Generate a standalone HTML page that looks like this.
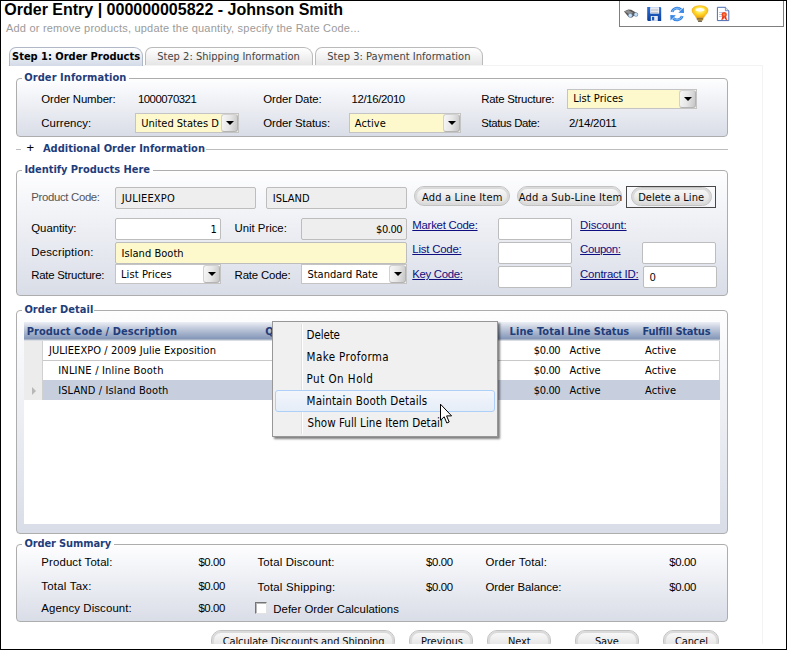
<!DOCTYPE html>
<html>
<head>
<meta charset="utf-8">
<title>Order Entry</title>
<style>
html,body{margin:0;padding:0;}
body{width:787px;height:650px;overflow:hidden;position:relative;background:#fff;font-family:"Liberation Sans",sans-serif;font-size:11px;color:#000;}
div,span,a,i{position:absolute;white-space:nowrap;box-sizing:border-box;}
#frame{left:0;top:0;width:787px;height:650px;border:1px solid #000;z-index:100;}
#clip{left:0;top:0;width:787px;height:644px;overflow:hidden;}
#title{left:4.3px;top:1px;font:bold 16px/18px "Liberation Sans",sans-serif;color:#000;}
#sub{left:6px;top:21px;font:11px/14px "Liberation Sans",sans-serif;color:#9b9b9b;letter-spacing:0.205px;}
#tb{left:619px;top:-2px;width:165px;height:29px;border:1px solid #7f7f7f;background:#fff;}
#panel{left:8px;top:65px;width:755px;height:590px;border:1px solid #f3f3f3;border-left:none;background:#fff;}
.tab{top:47px;height:18px;border:1px solid #bababa;border-bottom:none;border-radius:7px 9px 0 0;background:linear-gradient(#ffffff,#e6e6e6);}
.tab.on{height:19px;background:linear-gradient(#ffffff 0%,#e9edf3 45%,#d3dbe8 100%);border-color:#b0b8c8;}
.fs{border:1px solid #adadad;border-radius:4px;background:linear-gradient(#fefeff,#d9dde7);}
.cut{background:#fff;height:3px;}
.inp{border:1px solid #bdbdbd;border-radius:2px;background:#fff;height:22px;}
.inp.g{background:#eeeeee;}
.inp.y{background:#fdf9cd;}
.dd{border:1px solid #c4c4c4;background:#fff;height:20px;}
.dd.y{background:#fdf9cd;}
.dd i{right:0;top:0;width:17px;height:18px;border:1px solid #d2d2d2;border-right-color:#b4b4b4;border-bottom-color:#b4b4b4;border-radius:3px;background:linear-gradient(100deg,#f7f7f7,#e6e6e6 50%,#c6c6c6);}
.dd i:after{content:"";position:absolute;left:3.5px;top:6px;border:4px solid transparent;border-top:4px solid #000;border-bottom:none;}
.btn{height:20px;border:1px solid #c2c2c2;border-radius:10px;background:linear-gradient(#fafafa,#ececec 50%,#dcdcdc);box-shadow:inset 0 0 0 2px #dadada;}
</style>
</head>
<body>
<div id="clip">
<div id="title">Order Entry | 000000005822 - Johnson Smith</div>
<div id="sub">Add or remove products, update the quantity, specify the Rate Code...</div>
<div id="tb"></div>
<svg id="icons" style="position:absolute;left:620px;top:0;" width="120" height="26" viewBox="620 0 120 26">
<defs>
<linearGradient id="gfl" x1="0" y1="0" x2="0" y2="1"><stop offset="0" stop-color="#2f6fd6"/><stop offset="1" stop-color="#0b3f9c"/></linearGradient>
<radialGradient id="gbu" cx="0.5" cy="0.38" r="0.62"><stop offset="0" stop-color="#fffbd0"/><stop offset="0.45" stop-color="#ffe23a"/><stop offset="1" stop-color="#f7a400"/></radialGradient>
</defs>
<g>
<path d="M624 11.4 L628.2 9.4 L631.2 9.8 L637.6 13.6 L637.4 16.2 L634 15.8 L632 17.6 L628.6 17 Z" fill="#555555"/>
<path d="M624.4 11.5 L628.4 9.9 L633.6 13 L629.2 14.2 Z" fill="#8e8e8e"/>
<circle cx="630.3" cy="15.4" r="2" fill="#c4e3ff" stroke="#74859a" stroke-width="0.6"/>
<circle cx="635.9" cy="14.5" r="1.9" fill="#c4e3ff" stroke="#74859a" stroke-width="0.6"/>
</g>
<g>
<path d="M647.2 7 H660.4 L661.2 7.8 V20.9 H648 L647.2 20.1 Z" fill="url(#gfl)"/>
<rect x="650.2" y="7.2" width="8.9" height="6.4" fill="#f4f6fa"/>
<rect x="651" y="8.8" width="7.3" height="0.8" fill="#b8bcc6"/>
<rect x="651" y="10.4" width="7.3" height="0.8" fill="#b8bcc6"/>
<rect x="651" y="12" width="7.3" height="0.8" fill="#b8bcc6"/>
<rect x="650.8" y="16" width="7" height="4.9" fill="#e6eaf2"/>
<rect x="652" y="16.8" width="2.2" height="3.5" fill="#1d55b8"/>
</g>
<g fill="none" stroke-linecap="butt">
<path d="M672 12 A5.3 5.3 0 0 1 681 9.8" stroke="#2f7fe2" stroke-width="2.8"/>
<path d="M682.2 16 A5.3 5.3 0 0 1 673.2 18.2" stroke="#2f7fe2" stroke-width="2.8"/>
<path d="M672 12 A5.3 5.3 0 0 1 681 9.8" stroke="#86c0f8" stroke-width="1"/>
<path d="M682.2 16 A5.3 5.3 0 0 1 673.2 18.2" stroke="#86c0f8" stroke-width="1"/>
</g>
<path d="M678.4 12.8 L684 13 L683.8 7.4 Z" fill="#3787e6"/>
<path d="M675.8 15.2 L670.3 15 L670.5 20.6 Z" fill="#3787e6"/>
<g>
<path d="M692 10.3 C692 7 696 5.7 700 5.7 C704 5.7 708 7 708 10.3 C708 13.6 704.4 15.2 703.8 17.8 H696.2 C695.6 15.2 692 13.6 692 10.3 Z" fill="url(#gbu)" stroke="#f0a000" stroke-width="0.5"/>
<ellipse cx="700" cy="9.8" rx="4.6" ry="1.7" fill="#ffffff" opacity="0.92"/>
<rect x="696.8" y="17.4" width="6.4" height="3.2" rx="0.8" fill="#b8913c"/>
<rect x="696.8" y="18.5" width="6.4" height="0.7" fill="#6e5420"/>
<rect x="698" y="20.4" width="4" height="1.4" rx="0.5" fill="#4a3a18"/>
</g>
<g>
<path d="M717.4 7.3 H725.4 L728.8 10.7 V20.6 H717.4 Z" fill="#ffffff" stroke="#4a6db2" stroke-width="1"/>
<path d="M725.4 7.3 V10.7 H728.8" fill="#dbe5f5" stroke="#4a6db2" stroke-width="0.7"/>
<rect x="719" y="12" width="4" height="0.7" fill="#9db4dc"/>
<rect x="719" y="14" width="3" height="0.7" fill="#9db4dc"/>
<rect x="719" y="16" width="3" height="0.7" fill="#9db4dc"/>
<path d="M722.4 16 L721.2 20.4 L723.6 19 L724.2 17 L724.8 19 L727.2 20.4 L726 16 Z" fill="#e8381a"/>
<circle cx="724.2" cy="14.6" r="2.6" fill="#f0481c"/>
<circle cx="724.2" cy="14.6" r="1.2" fill="#ff8a50"/>
</g>
</svg>

<div id="panel"></div>

<div class="tab on" style="left:9px;width:134px;"></div>
<div class="tab" style="left:145px;width:168px;"></div>
<div class="tab" style="left:315px;width:168px;"></div>

<!-- Order Information -->
<div class="fs" style="left:16px;top:78px;width:712px;height:59px;"></div>
<div class="cut" style="left:22px;top:77px;width:107px;"></div>
<div class="dd y" style="left:567px;top:89px;width:130px;"><i></i></div>
<div class="dd y" style="left:135px;top:113px;width:104px;"><i></i></div>
<div class="dd y" style="left:349px;top:113px;width:112px;"><i></i></div>

<!-- Additional Order Information -->
<div style="left:16px;top:149px;width:5px;height:1px;background:#bdbdbd;"></div>
<div style="left:206px;top:149px;width:522px;height:1px;background:#bdbdbd;"></div>
<span style="left:26.6px;top:140px;font:13px/16px 'Liberation Sans',sans-serif;color:#000;">+</span>

<!-- Identify Products Here -->
<div class="fs" style="left:16px;top:170px;width:712px;height:126px;"></div>
<div class="cut" style="left:22px;top:169px;width:131px;"></div>
<div class="inp g" style="left:115px;top:187px;width:141px;"></div>
<div class="inp g" style="left:266px;top:187px;width:141px;"></div>
<div class="btn" style="left:414px;top:186px;width:96px;"></div>
<div class="btn" style="left:517px;top:186px;width:105px;"></div>
<div style="left:626px;top:186px;width:90px;height:22px;border:1px solid #484848;"></div>
<div class="btn" style="left:631px;top:187px;width:81px;height:19px;"></div>
<div class="inp" style="left:115px;top:218px;width:106px;"></div>
<div class="inp g" style="left:301px;top:218px;width:106px;"></div>
<div class="inp" style="left:498px;top:218px;width:74px;"></div>
<div class="inp y" style="left:115px;top:242px;width:292px;"></div>
<div class="inp" style="left:498px;top:242px;width:74px;"></div>
<div class="inp" style="left:642px;top:242px;width:74px;"></div>
<div class="dd" style="left:115px;top:264px;width:106px;"><i></i></div>
<div class="dd" style="left:301px;top:264px;width:106px;"><i></i></div>
<div class="inp" style="left:498px;top:266px;width:74px;"></div>
<div class="inp" style="left:643px;top:266px;width:74px;"></div>

<!-- Order Detail -->
<div class="fs" style="left:16px;top:310px;width:712px;height:224px;background:linear-gradient(#fefeff,#d9dde7);"></div>
<div class="cut" style="left:22px;top:309px;width:72px;"></div>
<div style="left:24px;top:322px;width:696px;height:202px;background:#fff;"></div>
<div id="hdr" style="left:24px;top:322px;width:696px;height:17px;background:linear-gradient(#edf0f5 0%,#cbd3e2 28%,#a8b5cd 62%,#8396b9 100%);"></div>
<div style="left:24px;top:339px;width:696px;height:1px;background:#a9b3c6;"></div>
<div style="left:24px;top:340px;width:696px;height:1px;background:#d9dce3;"></div>
<div style="left:24px;top:341px;width:19px;height:59px;background:#ececec;border-right:1px solid #d0d0d0;"></div>
<div style="left:43px;top:360px;width:677px;height:1px;background:#c9c9c9;"></div>
<div style="left:43px;top:380px;width:677px;height:20px;background:#c7cfdf;"></div>
<div style="left:719px;top:341px;width:1px;height:39px;background:#cfcfcf;"></div>
<div style="left:32px;top:387px;border:4px solid transparent;border-left:4px solid #b8b8b8;border-right:none;"></div>

<!-- Order Summary -->
<div class="fs" style="left:16px;top:544px;width:712px;height:78px;"></div>
<div class="cut" style="left:22px;top:543px;width:92px;"></div>
<div style="left:255px;top:602px;width:12px;height:12px;border:1px solid #757575;border-right-color:#e2e2e2;border-bottom-color:#e2e2e2;background:#fff;box-shadow:inset 1px 1px 0 #b9b9b9;"></div>

<!-- bottom buttons -->
<div class="btn" style="left:211px;top:630px;width:184px;height:22px;"></div>
<div class="btn" style="left:409px;top:630px;width:64px;height:22px;"></div>
<div class="btn" style="left:487px;top:630px;width:64px;height:22px;"></div>
<div class="btn" style="left:575px;top:630px;width:64px;height:22px;"></div>
<div class="btn" style="left:663px;top:630px;width:56px;height:22px;"></div>

<div style="left:41.3px;top:92px;font:11.4px/14px 'Liberation Sans',sans-serif;color:#000;letter-spacing:-0.13px;">Order Number:</div>
<div style="left:137.9px;top:92px;font:11.4px/14px 'Liberation Sans',sans-serif;color:#000;letter-spacing:-0.50px;">1000070321</div>
<div style="left:263.3px;top:92px;font:11.4px/14px 'Liberation Sans',sans-serif;color:#000;letter-spacing:-0.11px;">Order Date:</div>
<div style="left:351.5px;top:92px;font:11.4px/14px 'Liberation Sans',sans-serif;color:#000;letter-spacing:-0.37px;">12/16/2010</div>
<div style="left:481.3px;top:92px;font:11.4px/14px 'Liberation Sans',sans-serif;color:#000;letter-spacing:-0.25px;">Rate Structure:</div>
<div style="left:41.3px;top:116px;font:11.4px/14px 'Liberation Sans',sans-serif;color:#000;letter-spacing:0.05px;">Currency:</div>
<div style="left:263.3px;top:116px;font:11.4px/14px 'Liberation Sans',sans-serif;color:#000;letter-spacing:-0.08px;">Order Status:</div>
<div style="left:481.3px;top:116px;font:11.4px/14px 'Liberation Sans',sans-serif;color:#000;letter-spacing:-0.37px;">Status Date:</div>
<div style="left:569.0px;top:116px;font:11.4px/14px 'Liberation Sans',sans-serif;color:#000;letter-spacing:-0.25px;">2/14/2011</div>
<div style="left:31.3px;top:190px;font:11.4px/14px 'Liberation Sans',sans-serif;color:#555;letter-spacing:-0.34px;">Product Code:</div>
<div style="left:31.3px;top:221px;font:11.4px/14px 'Liberation Sans',sans-serif;color:#000;letter-spacing:-0.05px;">Quantity:</div>
<div style="left:234.6px;top:221px;font:11.4px/14px 'Liberation Sans',sans-serif;color:#000;letter-spacing:-0.03px;">Unit Price:</div>
<div style="left:31.3px;top:245px;font:11.4px/14px 'Liberation Sans',sans-serif;color:#000;letter-spacing:0.17px;">Description:</div>
<div style="left:31.3px;top:268px;font:11.4px/14px 'Liberation Sans',sans-serif;color:#000;letter-spacing:-0.25px;">Rate Structure:</div>
<div style="left:234.6px;top:268px;font:11.4px/14px 'Liberation Sans',sans-serif;color:#000;letter-spacing:-0.17px;">Rate Code:</div>
<a style="left:412.3px;top:218px;font:11.4px/14px 'Liberation Sans',sans-serif;color:#0e0e80;letter-spacing:-0.26px;text-decoration:underline;">Market Code:</a>
<a style="left:412.3px;top:242px;font:11.4px/14px 'Liberation Sans',sans-serif;color:#0e0e80;letter-spacing:-0.21px;text-decoration:underline;">List Code:</a>
<a style="left:412.3px;top:267px;font:11.4px/14px 'Liberation Sans',sans-serif;color:#0e0e80;letter-spacing:-0.33px;text-decoration:underline;">Key Code:</a>
<a style="left:580.1px;top:218px;font:11.4px/14px 'Liberation Sans',sans-serif;color:#0e0e80;letter-spacing:-0.11px;text-decoration:underline;">Discount:</a>
<a style="left:580.1px;top:242px;font:11.4px/14px 'Liberation Sans',sans-serif;color:#0e0e80;letter-spacing:-0.37px;text-decoration:underline;">Coupon:</a>
<a style="left:580.1px;top:267px;font:11.4px/14px 'Liberation Sans',sans-serif;color:#0e0e80;letter-spacing:-0.20px;text-decoration:underline;">Contract ID:</a>
<div style="left:649.7px;top:270px;font:10.6px/14px 'Liberation Sans',sans-serif;color:#000;">0</div>
<div style="left:41.3px;top:555px;font:11.4px/14px 'Liberation Sans',sans-serif;color:#000;letter-spacing:0.13px;">Product Total:</div>
<div style="left:198.4px;top:555px;font:11.4px/14px 'Liberation Sans',sans-serif;color:#000;letter-spacing:-0.37px;">$0.00</div>
<div style="left:257.5px;top:555px;font:11.4px/14px 'Liberation Sans',sans-serif;color:#000;letter-spacing:0.16px;">Total Discount:</div>
<div style="left:426.1px;top:555px;font:11.4px/14px 'Liberation Sans',sans-serif;color:#000;letter-spacing:-0.37px;">$0.00</div>
<div style="left:485.4px;top:555px;font:11.4px/14px 'Liberation Sans',sans-serif;color:#000;letter-spacing:0.21px;">Order Total:</div>
<div style="left:669.3px;top:555px;font:11.4px/14px 'Liberation Sans',sans-serif;color:#000;letter-spacing:-0.37px;">$0.00</div>
<div style="left:41.3px;top:579px;font:11.4px/14px 'Liberation Sans',sans-serif;color:#000;letter-spacing:0.24px;">Total Tax:</div>
<div style="left:198.4px;top:579px;font:11.4px/14px 'Liberation Sans',sans-serif;color:#000;letter-spacing:-0.37px;">$0.00</div>
<div style="left:257.5px;top:580px;font:11.4px/14px 'Liberation Sans',sans-serif;color:#000;letter-spacing:0.21px;">Total Shipping:</div>
<div style="left:426.1px;top:580px;font:11.4px/14px 'Liberation Sans',sans-serif;color:#000;letter-spacing:-0.37px;">$0.00</div>
<div style="left:485.4px;top:580px;font:11.4px/14px 'Liberation Sans',sans-serif;color:#000;letter-spacing:-0.04px;">Order Balance:</div>
<div style="left:669.3px;top:580px;font:11.4px/14px 'Liberation Sans',sans-serif;color:#000;letter-spacing:-0.37px;">$0.00</div>
<div style="left:41.3px;top:601px;font:11.4px/14px 'Liberation Sans',sans-serif;color:#000;letter-spacing:0.12px;">Agency Discount:</div>
<div style="left:198.4px;top:601px;font:11.4px/14px 'Liberation Sans',sans-serif;color:#000;letter-spacing:-0.37px;">$0.00</div>
<div style="left:273.3px;top:602px;font:11.4px/14px 'Liberation Sans',sans-serif;color:#000;letter-spacing:0.01px;">Defer Order Calculations</div>
<div style="left:12.1px;top:50px;font:bold 11px/14px 'DejaVu Sans Condensed','Liberation Sans',sans-serif;color:#000;letter-spacing:-0.02px;">Step 1: Order Products</div>
<div style="left:157.3px;top:50px;font:11px/14px 'DejaVu Sans Condensed','Liberation Sans',sans-serif;color:#444;letter-spacing:0.02px;">Step 2: Shipping Information</div>
<div style="left:327.3px;top:50px;font:11px/14px 'DejaVu Sans Condensed','Liberation Sans',sans-serif;color:#444;letter-spacing:0.04px;">Step 3: Payment Information</div>
<div style="left:24.3px;top:71px;font:bold 11px/14px 'DejaVu Sans Condensed','Liberation Sans',sans-serif;color:#1f3d7a;letter-spacing:0.06px;">Order Information</div>
<div style="left:42.9px;top:142px;font:bold 11px/14px 'DejaVu Sans Condensed','Liberation Sans',sans-serif;color:#1f3d7a;letter-spacing:0.01px;">Additional Order Information</div>
<div style="left:24.4px;top:163px;font:bold 11px/14px 'DejaVu Sans Condensed','Liberation Sans',sans-serif;color:#1f3d7a;letter-spacing:-0.04px;">Identify Products Here</div>
<div style="left:24.4px;top:303px;font:bold 11px/14px 'DejaVu Sans Condensed','Liberation Sans',sans-serif;color:#1f3d7a;letter-spacing:0.04px;">Order Detail</div>
<div style="left:24.4px;top:537px;font:bold 11px/14px 'DejaVu Sans Condensed','Liberation Sans',sans-serif;color:#1f3d7a;letter-spacing:-0.12px;">Order Summary</div>
<div style="left:573.3px;top:92px;font:11px/14px 'DejaVu Sans Condensed','Liberation Sans',sans-serif;color:#000;letter-spacing:0.02px;">List Prices</div>
<div style="left:141.2px;top:117px;font:11px/14px 'DejaVu Sans Condensed','Liberation Sans',sans-serif;color:#000;letter-spacing:-0.01px;">United States D</div>
<div style="left:354.8px;top:117px;font:11px/14px 'DejaVu Sans Condensed','Liberation Sans',sans-serif;color:#000;letter-spacing:0.10px;">Active</div>
<div style="left:121.0px;top:268px;font:11px/14px 'DejaVu Sans Condensed','Liberation Sans',sans-serif;color:#000;letter-spacing:0.10px;">List Prices</div>
<div style="left:307.5px;top:268px;font:11px/14px 'DejaVu Sans Condensed','Liberation Sans',sans-serif;color:#000;letter-spacing:-0.03px;">Standard Rate</div>
<div style="left:121.8px;top:192px;font:11px/14px 'DejaVu Sans Condensed','Liberation Sans',sans-serif;color:#000;letter-spacing:0.16px;">JULIEEXPO</div>
<div style="left:272.7px;top:192px;font:11px/14px 'DejaVu Sans Condensed','Liberation Sans',sans-serif;color:#000;letter-spacing:0.03px;">ISLAND</div>
<div style="left:210.5px;top:223px;font:11px/14px 'DejaVu Sans Condensed','Liberation Sans',sans-serif;color:#000;">1</div>
<div style="left:376.1px;top:223px;font:11px/14px 'DejaVu Sans Condensed','Liberation Sans',sans-serif;color:#000;letter-spacing:-0.46px;">$0.00</div>
<div style="left:121.6px;top:247px;font:11px/14px 'DejaVu Sans Condensed','Liberation Sans',sans-serif;color:#000;letter-spacing:0.03px;">Island Booth</div>
<div style="left:421.9px;top:191px;font:11px/14px 'DejaVu Sans Condensed','Liberation Sans',sans-serif;color:#0a0a0a;letter-spacing:0.19px;">Add a Line Item</div>
<div style="left:518.8px;top:191px;font:11px/14px 'DejaVu Sans Condensed','Liberation Sans',sans-serif;color:#0a0a0a;letter-spacing:0.17px;">Add a Sub-Line Item</div>
<div style="left:638.2px;top:191px;font:11px/14px 'DejaVu Sans Condensed','Liberation Sans',sans-serif;color:#0a0a0a;letter-spacing:0.03px;">Delete a Line</div>
<div style="left:26.7px;top:325px;font:bold 11px/14px 'DejaVu Sans Condensed','Liberation Sans',sans-serif;color:#1f3d7a;letter-spacing:0.04px;">Product Code / Description</div>
<div style="left:265.2px;top:325px;font:bold 11px/14px 'DejaVu Sans Condensed','Liberation Sans',sans-serif;color:#1f3d7a;">Quantity</div>
<div style="left:509.5px;top:325px;font:bold 11px/14px 'DejaVu Sans Condensed','Liberation Sans',sans-serif;color:#1f3d7a;letter-spacing:0.11px;">Line Total</div>
<div style="left:567.4px;top:325px;font:bold 11px/14px 'DejaVu Sans Condensed','Liberation Sans',sans-serif;color:#1f3d7a;letter-spacing:-0.13px;">Line Status</div>
<div style="left:642.5px;top:325px;font:bold 11px/14px 'DejaVu Sans Condensed','Liberation Sans',sans-serif;color:#1f3d7a;letter-spacing:-0.21px;">Fulfill Status</div>
<div style="left:48.9px;top:344px;font:11px/14px 'DejaVu Sans Condensed','Liberation Sans',sans-serif;color:#000;letter-spacing:0.07px;">JULIEEXPO / 2009 Julie Exposition</div>
<div style="left:58.2px;top:364px;font:11px/14px 'DejaVu Sans Condensed','Liberation Sans',sans-serif;color:#000;letter-spacing:0.20px;">INLINE / Inline Booth</div>
<div style="left:58.2px;top:384px;font:11px/14px 'DejaVu Sans Condensed','Liberation Sans',sans-serif;color:#000;letter-spacing:0.11px;">ISLAND / Island Booth</div>
<div style="left:533.8px;top:344px;font:11px/14px 'DejaVu Sans Condensed','Liberation Sans',sans-serif;color:#000;letter-spacing:-0.38px;">$0.00</div>
<div style="left:569.6px;top:344px;font:11px/14px 'DejaVu Sans Condensed','Liberation Sans',sans-serif;color:#000;letter-spacing:0.10px;">Active</div>
<div style="left:645.0px;top:344px;font:11px/14px 'DejaVu Sans Condensed','Liberation Sans',sans-serif;color:#000;letter-spacing:0.10px;">Active</div>
<div style="left:533.8px;top:364px;font:11px/14px 'DejaVu Sans Condensed','Liberation Sans',sans-serif;color:#000;letter-spacing:-0.38px;">$0.00</div>
<div style="left:569.6px;top:364px;font:11px/14px 'DejaVu Sans Condensed','Liberation Sans',sans-serif;color:#000;letter-spacing:0.10px;">Active</div>
<div style="left:645.0px;top:364px;font:11px/14px 'DejaVu Sans Condensed','Liberation Sans',sans-serif;color:#000;letter-spacing:0.10px;">Active</div>
<div style="left:533.8px;top:384px;font:11px/14px 'DejaVu Sans Condensed','Liberation Sans',sans-serif;color:#000;letter-spacing:-0.38px;">$0.00</div>
<div style="left:569.6px;top:384px;font:11px/14px 'DejaVu Sans Condensed','Liberation Sans',sans-serif;color:#000;letter-spacing:0.10px;">Active</div>
<div style="left:645.0px;top:384px;font:11px/14px 'DejaVu Sans Condensed','Liberation Sans',sans-serif;color:#000;letter-spacing:0.10px;">Active</div>
<div style="left:222.8px;top:635px;font:11px/14px 'DejaVu Sans Condensed','Liberation Sans',sans-serif;color:#0a0a0a;letter-spacing:-0.14px;">Calculate Discounts and Shipping</div>
<div style="left:420.9px;top:635px;font:11px/14px 'DejaVu Sans Condensed','Liberation Sans',sans-serif;color:#0a0a0a;letter-spacing:0.04px;">Previous</div>
<div style="left:508.1px;top:635px;font:11px/14px 'DejaVu Sans Condensed','Liberation Sans',sans-serif;color:#0a0a0a;letter-spacing:-0.18px;">Next</div>
<div style="left:594.9px;top:635px;font:11px/14px 'DejaVu Sans Condensed','Liberation Sans',sans-serif;color:#0a0a0a;letter-spacing:-0.10px;">Save</div>
<div style="left:674.9px;top:635px;font:11px/14px 'DejaVu Sans Condensed','Liberation Sans',sans-serif;color:#0a0a0a;letter-spacing:-0.10px;">Cancel</div>

<!-- context menu -->
<div id="menu" style="left:272px;top:321px;width:226px;height:116px;background:#f0f0f0;border:1px solid #979797;box-shadow:2px 2px 2px rgba(0,0,0,0.5);"></div>
<div style="left:301px;top:324px;width:1px;height:110px;background:#e0e0e0;"></div>
<div style="left:302px;top:324px;width:1px;height:110px;background:#fff;"></div>
<div style="left:275px;top:390px;width:220px;height:22px;border:1px solid #aecff7;border-radius:3px;background:linear-gradient(#f3f6fb,#e5edf8);"></div>
<div style="left:306.6px;top:328px;font:11.5px/14px 'DejaVu Sans Condensed','Liberation Sans',sans-serif;color:#000;letter-spacing:-0.13px;">Delete</div>
<div style="left:306.6px;top:350px;font:11.5px/14px 'DejaVu Sans Condensed','Liberation Sans',sans-serif;color:#000;letter-spacing:0.40px;">Make Proforma</div>
<div style="left:306.6px;top:372px;font:11.5px/14px 'DejaVu Sans Condensed','Liberation Sans',sans-serif;color:#000;letter-spacing:0.48px;">Put On Hold</div>
<div style="left:306.6px;top:394px;font:11.5px/14px 'DejaVu Sans Condensed','Liberation Sans',sans-serif;color:#000;letter-spacing:0.15px;">Maintain Booth Details</div>
<div style="left:307.6px;top:416px;font:11.5px/14px 'DejaVu Sans Condensed','Liberation Sans',sans-serif;color:#000;letter-spacing:0.04px;">Show Full Line Item Detail</div>
<svg style="position:absolute;left:439px;top:403px;z-index:50;" width="14" height="22" viewBox="0 0 14 22"><path d="M1.5 1.2 V17.2 L5.2 13.8 L7.8 20 L10.2 19 L7.6 12.9 H12.6 Z" fill="#fff" stroke="#000" stroke-width="1" stroke-linejoin="miter"/></svg>
</div>
<div id="frame"></div>
</body>
</html>
